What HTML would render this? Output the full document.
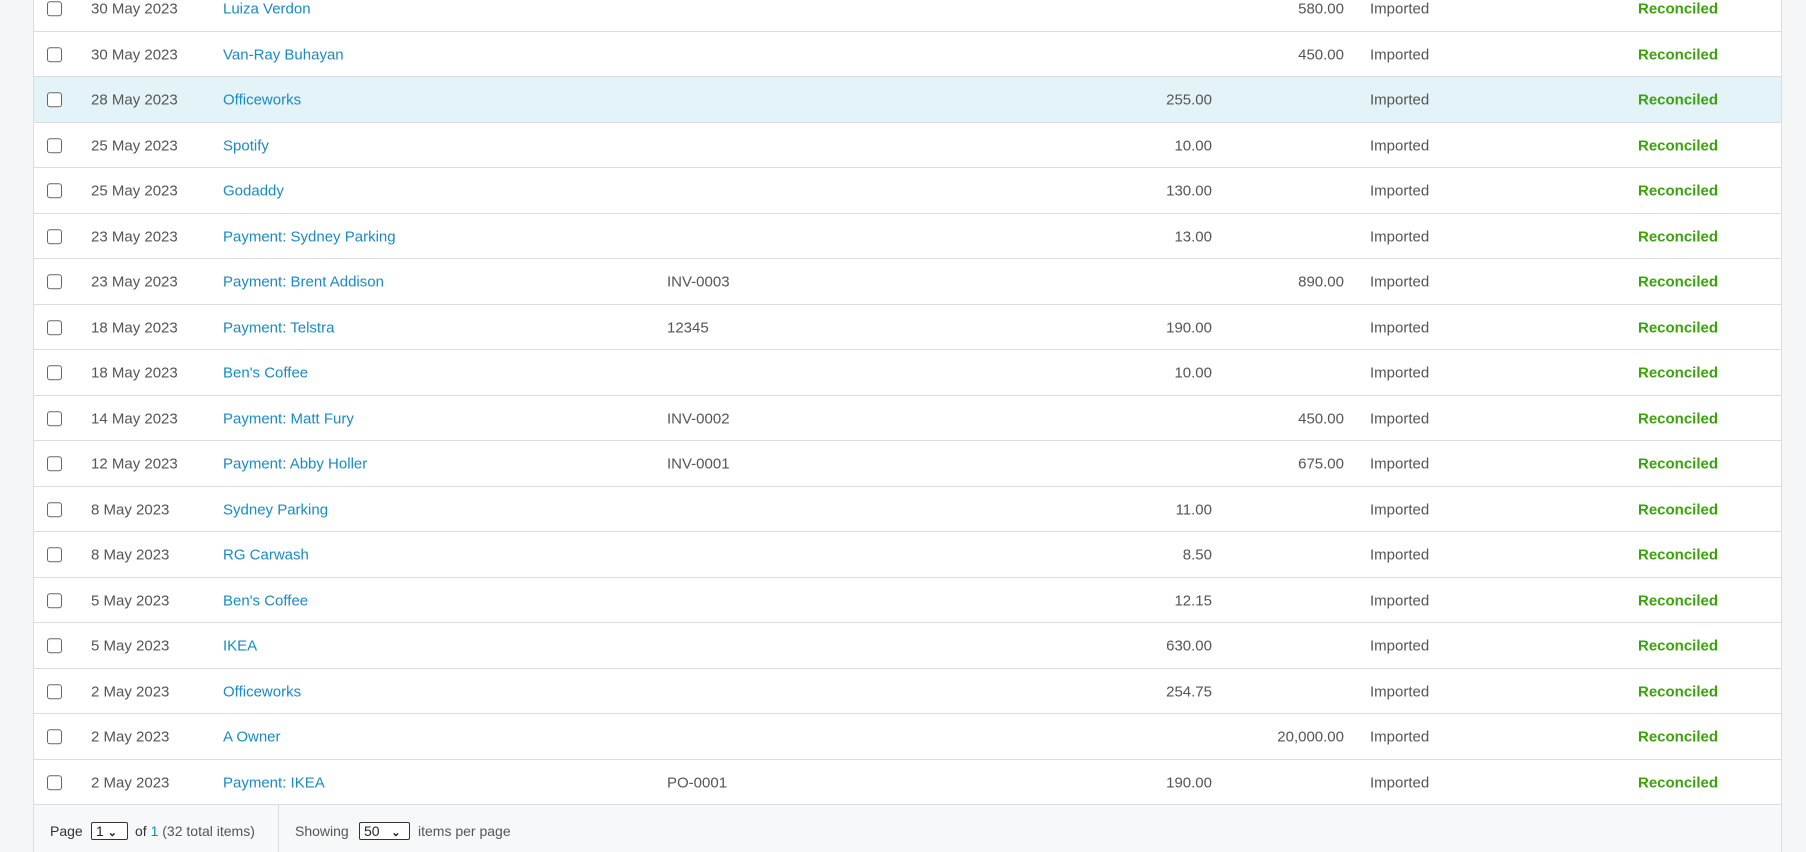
<!DOCTYPE html>
<html style="overflow:hidden;height:852px"><head><style>
body{margin:0;width:1806px;height:852px;overflow:hidden;background:#f5f6f8;font-family:"Liberation Sans",Arial,sans-serif;font-size:15px;color:#555;position:relative}
.panel{position:absolute;left:33px;top:-20px;width:1749px;height:880px;background:#fff;border-left:1px solid #ddd;border-right:1px solid #ddd;box-sizing:border-box}
.row{position:absolute;left:34px;width:1747px;height:45.5px;border-bottom:1px solid #dcdcdc;box-sizing:border-box}
.row.hl{background:#e4f3f8}
.row span{position:absolute;top:50%;transform:translateY(-45%);white-space:nowrap}
.cb{left:13px;width:13px;height:13px;border:1.5px solid #666;border-radius:3px;background:#fff}
.d{left:57px}.n{left:189px;color:#1a8ac4}.r{left:633px}
.s{right:569px}.v{right:437px}.i{left:1336px}
.g{left:1604px;color:#3ba30a;font-weight:bold}
.foot{position:absolute;left:34px;top:805px;width:1747px;height:47px;background:#f7f8f9}
.foot span{position:absolute;top:26px;transform:translateY(-50%);white-space:nowrap}
.sel{border:1px solid #333;border-radius:2px;height:18px;background:#fff;box-sizing:border-box;color:#222;font-size:14px;line-height:16px;padding-left:4px}
</style></head><body>
<div class="panel"></div>
<div class="row" style="top:-14px"><span class="cb"></span><span class="d">30 May 2023</span><span class="n">Luiza Verdon</span><span class="v">580.00</span><span class="i">Imported</span><span class="g">Reconciled</span></div>
<div class="row" style="top:31.5px"><span class="cb"></span><span class="d">30 May 2023</span><span class="n">Van-Ray Buhayan</span><span class="v">450.00</span><span class="i">Imported</span><span class="g">Reconciled</span></div>
<div class="row hl" style="top:77px"><span class="cb"></span><span class="d">28 May 2023</span><span class="n">Officeworks</span><span class="s">255.00</span><span class="i">Imported</span><span class="g">Reconciled</span></div>
<div class="row" style="top:122.5px"><span class="cb"></span><span class="d">25 May 2023</span><span class="n">Spotify</span><span class="s">10.00</span><span class="i">Imported</span><span class="g">Reconciled</span></div>
<div class="row" style="top:168px"><span class="cb"></span><span class="d">25 May 2023</span><span class="n">Godaddy</span><span class="s">130.00</span><span class="i">Imported</span><span class="g">Reconciled</span></div>
<div class="row" style="top:213.5px"><span class="cb"></span><span class="d">23 May 2023</span><span class="n">Payment: Sydney Parking</span><span class="s">13.00</span><span class="i">Imported</span><span class="g">Reconciled</span></div>
<div class="row" style="top:259px"><span class="cb"></span><span class="d">23 May 2023</span><span class="n">Payment: Brent Addison</span><span class="r">INV-0003</span><span class="v">890.00</span><span class="i">Imported</span><span class="g">Reconciled</span></div>
<div class="row" style="top:304.5px"><span class="cb"></span><span class="d">18 May 2023</span><span class="n">Payment: Telstra</span><span class="r">12345</span><span class="s">190.00</span><span class="i">Imported</span><span class="g">Reconciled</span></div>
<div class="row" style="top:350px"><span class="cb"></span><span class="d">18 May 2023</span><span class="n">Ben's Coffee</span><span class="s">10.00</span><span class="i">Imported</span><span class="g">Reconciled</span></div>
<div class="row" style="top:395.5px"><span class="cb"></span><span class="d">14 May 2023</span><span class="n">Payment: Matt Fury</span><span class="r">INV-0002</span><span class="v">450.00</span><span class="i">Imported</span><span class="g">Reconciled</span></div>
<div class="row" style="top:441px"><span class="cb"></span><span class="d">12 May 2023</span><span class="n">Payment: Abby Holler</span><span class="r">INV-0001</span><span class="v">675.00</span><span class="i">Imported</span><span class="g">Reconciled</span></div>
<div class="row" style="top:486.5px"><span class="cb"></span><span class="d">8 May 2023</span><span class="n">Sydney Parking</span><span class="s">11.00</span><span class="i">Imported</span><span class="g">Reconciled</span></div>
<div class="row" style="top:532px"><span class="cb"></span><span class="d">8 May 2023</span><span class="n">RG Carwash</span><span class="s">8.50</span><span class="i">Imported</span><span class="g">Reconciled</span></div>
<div class="row" style="top:577.5px"><span class="cb"></span><span class="d">5 May 2023</span><span class="n">Ben's Coffee</span><span class="s">12.15</span><span class="i">Imported</span><span class="g">Reconciled</span></div>
<div class="row" style="top:623px"><span class="cb"></span><span class="d">5 May 2023</span><span class="n">IKEA</span><span class="s">630.00</span><span class="i">Imported</span><span class="g">Reconciled</span></div>
<div class="row" style="top:668.5px"><span class="cb"></span><span class="d">2 May 2023</span><span class="n">Officeworks</span><span class="s">254.75</span><span class="i">Imported</span><span class="g">Reconciled</span></div>
<div class="row" style="top:714px"><span class="cb"></span><span class="d">2 May 2023</span><span class="n">A Owner</span><span class="v">20,000.00</span><span class="i">Imported</span><span class="g">Reconciled</span></div>
<div class="row" style="top:759.5px"><span class="cb"></span><span class="d">2 May 2023</span><span class="n">Payment: IKEA</span><span class="r">PO-0001</span><span class="s">190.00</span><span class="i">Imported</span><span class="g">Reconciled</span></div>
<div class="foot">
<span style="left:16px;color:#333;font-size:14px">Page</span>
<span class="sel" style="left:57px;width:37px">1 <b style="font-size:11px">&#8964;</b></span>
<span style="left:101px;font-size:14px"><span style="position:static;transform:none;color:#333">of</span> <span style="position:static;transform:none;color:#1a8ac4">1</span> (32 total items)</span>
<div style="position:absolute;left:244px;top:0;width:1px;height:47px;background:#ddd"></div>
<span style="left:261px;font-size:14px">Showing</span>
<span class="sel" style="left:325px;width:51px">50 &nbsp;&nbsp;<b style="font-size:11px">&#8964;</b></span>
<span style="left:384px;font-size:14px">items per page</span>
</div>
</body></html>
